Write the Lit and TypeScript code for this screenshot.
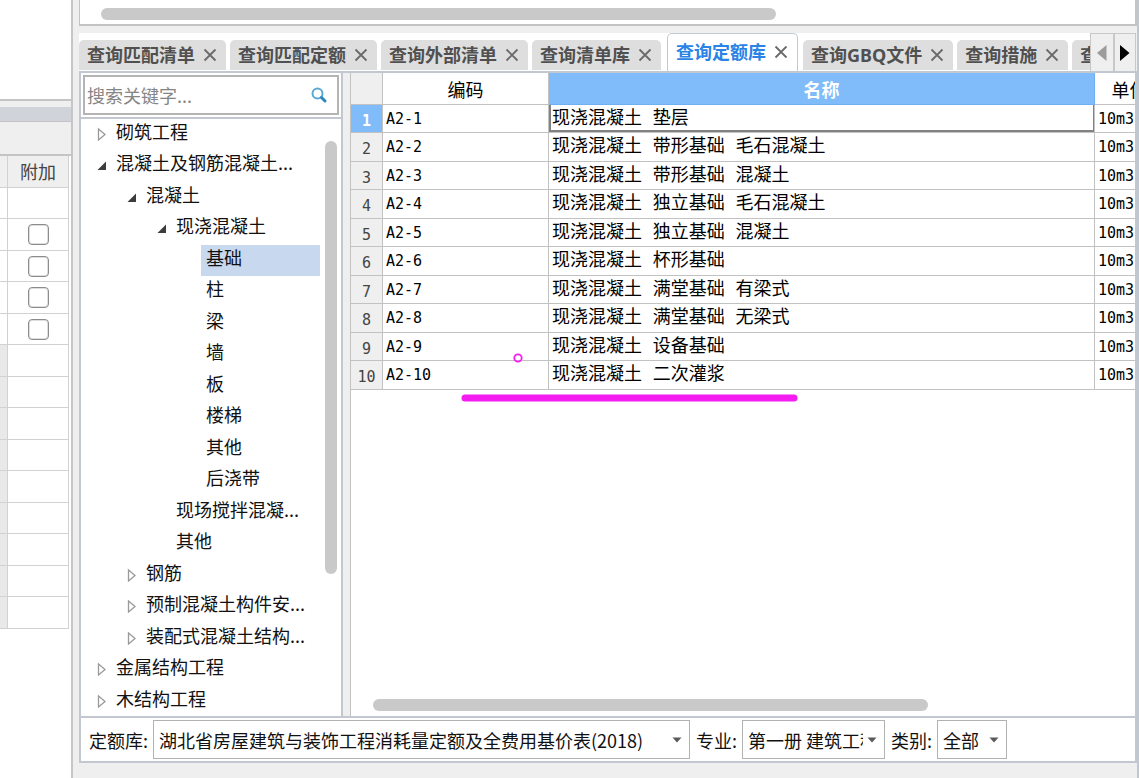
import { LitElement, html, css, svg, nothing } from "lit";
import { customElement, property } from "lit/decorators.js";
import { classMap } from "lit/directives/class-map.js";
import { styleMap } from "lit/directives/style-map.js";

type NodeState = "open" | "closed" | "leaf";

interface TreeNode {
  label: string;
  level: number;
  state: NodeState;
  selected?: boolean;
}

const TABS = [
  { label: "查询匹配清单" },
  { label: "查询匹配定额" },
  { label: "查询外部清单" },
  { label: "查询清单库" },
  { label: "查询定额库", active: true },
  { label: "查询GBQ文件" },
  { label: "查询措施" },
  { label: "查询人材机" },
];

const TREE: TreeNode[] = [
  { label: "砌筑工程", level: 0, state: "closed" },
  { label: "混凝土及钢筋混凝土...", level: 0, state: "open" },
  { label: "混凝土", level: 1, state: "open" },
  { label: "现浇混凝土", level: 2, state: "open" },
  { label: "基础", level: 3, state: "leaf", selected: true },
  { label: "柱", level: 3, state: "leaf" },
  { label: "梁", level: 3, state: "leaf" },
  { label: "墙", level: 3, state: "leaf" },
  { label: "板", level: 3, state: "leaf" },
  { label: "楼梯", level: 3, state: "leaf" },
  { label: "其他", level: 3, state: "leaf" },
  { label: "后浇带", level: 3, state: "leaf" },
  { label: "现场搅拌混凝...", level: 2, state: "leaf" },
  { label: "其他", level: 2, state: "leaf" },
  { label: "钢筋", level: 1, state: "closed" },
  { label: "预制混凝土构件安...", level: 1, state: "closed" },
  { label: "装配式混凝土结构...", level: 1, state: "closed" },
  { label: "金属结构工程", level: 0, state: "closed" },
  { label: "木结构工程", level: 0, state: "closed" },
];

const ROWS = [
  { code: "A2-1", name: "现浇混凝土 垫层" },
  { code: "A2-2", name: "现浇混凝土 带形基础 毛石混凝土" },
  { code: "A2-3", name: "现浇混凝土 带形基础 混凝土" },
  { code: "A2-4", name: "现浇混凝土 独立基础 毛石混凝土" },
  { code: "A2-5", name: "现浇混凝土 独立基础 混凝土" },
  { code: "A2-6", name: "现浇混凝土 杯形基础" },
  { code: "A2-7", name: "现浇混凝土 满堂基础 有梁式" },
  { code: "A2-8", name: "现浇混凝土 满堂基础 无梁式" },
  { code: "A2-9", name: "现浇混凝土 设备基础" },
  { code: "A2-10", name: "现浇混凝土 二次灌浆" },
];

const FIELDS = [
  { id: "lib", label: "定额库:", value: "湖北省房屋建筑与装饰工程消耗量定额及全费用基价表(2018)", size: "large" },
  { id: "major", label: "专业:", value: "第一册 建筑工程", size: "medium" },
  { id: "kind", label: "类别:", value: "全部", size: "small" },
];

/** Sheet at the far left, of which the last columns are in view. */
@customElement("side-sheet")
export class SideSheet extends LitElement {
  static styles = css`
    :host {
      display: flex;
      flex-direction: column;
      background: #fff;
      border-right: 2px solid #c6c6c8;
      overflow: hidden;
    }
    .blank { height: 99px; border-bottom: 2px solid #c4c4c4; }
    .gap { height: 6px; background: #efefef; }
    .caption { height: 14px; background: #d1d3da; border-bottom: 1px solid #c4c4c8; }
    .toolbar { height: 32px; background: #efefef; border-bottom: 2px solid #c4c4c4; }
    .sheet {
      width: 69px;
      border-collapse: separate;
      border-spacing: 0;
      table-layout: fixed;
    }
    .edge { width: 8px; }
    th, td {
      box-sizing: border-box;
      height: 32px;
      padding: 0;
      border-right: 1px solid #d2d2d2;
      border-bottom: 1px solid #d2d2d2;
      text-align: center;
      vertical-align: middle;
    }
    th {
      height: 32px;
      padding-bottom: 2px;
      background: #efefef;
      color: #444;
      font-size: 18px;
      line-height: 24px;
      font-weight: 400;
    }
    tbody tr:nth-child(odd) td { height: 31px; }
    .shade { background: #e9e9e9; }
    input {
      appearance: none;
      display: block;
      box-sizing: border-box;
      width: 21px;
      height: 21px;
      margin: 0 auto;
      border: 1px solid #8c8c8c;
      border-radius: 4px;
      background: #fff;
      box-shadow: inset 0 0 0 1px #dedede;
    }
  `;

  render() {
    return html`
      <div class="blank"></div>
      <div class="gap"></div>
      <div class="caption"></div>
      <div class="toolbar"></div>
      <table class="sheet">
        <thead>
          <tr><th class="edge"></th><th>附加</th></tr>
        </thead>
        <tbody>
          ${Array.from({ length: 14 }, (_, i) => html`
            <tr>
              <td class=${classMap({ shade: i > 4 })}></td>
              <td>${i > 0 && i < 5
                ? html`<input type="checkbox" aria-label="附加" />`
                : nothing}</td>
            </tr>`)}
        </tbody>
      </table>
    `;
  }
}

@customElement("tab-strip")
export class TabStrip extends LitElement {
  static styles = css`
    :host {
      display: flex;
      height: 38px;
      margin-right: 1px;
      background: #fff;
    }
    .tabs {
      flex: 1;
      min-width: 0;
      display: flex;
      align-items: flex-end;
      gap: 4px;
      overflow: hidden;
    }
    .tab {
      flex: none;
      display: flex;
      align-items: center;
      box-sizing: border-box;
      height: 30px;
      margin-bottom: 1px;
      padding: 0 9px 0 8px;
      gap: 8px;
      border-radius: 5px 5px 0 0;
      background: #dedede;
      color: #505050;
    }
    .active {
      height: 38px;
      margin: 0 1px 0 2px;
      padding-bottom: 2px;
      border: 1px solid #c3cad3;
      border-bottom: 0;
      background: #fff;
      color: #2b83e6;
    }
    button {
      padding: 0;
      border: 0;
      background: none;
      color: inherit;
      font: inherit;
    }
    .name {
      font-family: "Noto Sans", "Noto Sans CJK SC", sans-serif;
      font-size: 18px;
      line-height: 26px;
      font-weight: 700;
      white-space: nowrap;
    }
    .close { display: flex; color: #6a6a6a; }
    .nav {
      display: flex;
      box-sizing: border-box;
      border: 1px solid #c8c8c8;
      border-bottom: 0;
    }
    .step {
      display: flex;
      align-items: center;
      justify-content: center;
      width: 22px;
      background: #efefef;
      color: #000;
    }
    .step + .step { border-left: 2px solid #c8c8c8; }
    .off { color: #9c9c9c; }
  `;

  render() {
    return html`
      <div class="tabs" role="tablist">
        ${TABS.map((t) => html`
          <div class=${classMap({ tab: true, active: !!t.active })}>
            <button class="name" role="tab" aria-selected=${t.active ? "true" : "false"}>${t.label}</button>
            <button class="close" aria-label="关闭">
              <svg width="14" height="14" viewBox="0 0 14 14" fill="none" stroke="currentColor" stroke-width="1.8">
                <path d="M1.500 1.500 12.500 12.500M12.500 1.500 1.500 12.500" />
              </svg>
            </button>
          </div>`)}
      </div>
      <div class="nav">
        <button class="step off" aria-label="向左">
          <svg width="10" height="16" viewBox="0 0 10 16"><path d="M9.500 0V16L0 8Z" fill="currentColor" /></svg>
        </button>
        <button class="step" aria-label="向右">
          <svg width="10" height="18" viewBox="0 0 10 18"><path d="M0 1V17L9.500 9Z" fill="currentColor" /></svg>
        </button>
      </div>
    `;
  }
}

@customElement("chapter-tree")
export class ChapterTree extends LitElement {
  @property({ attribute: false }) nodes: TreeNode[] = [];

  static styles = css`
    :host {
      display: flex;
      flex-direction: column;
      background: #fff;
      overflow: hidden;
    }
    .search {
      display: flex;
      align-items: center;
      box-sizing: border-box;
      height: 40px;
      margin: 2px;
      padding: 0 9px 0 2px;
      border: 2px solid #b4b4b4;
    }
    input {
      flex: 1;
      min-width: 0;
      padding: 0;
      border: 0;
      outline: 0;
      background: none;
      color: #000;
      font: inherit;
      font-size: 18px;
      line-height: 26px;
    }
    input::placeholder { color: #858585; opacity: 1; }
    .body {
      flex: 1;
      min-height: 0;
      display: flex;
      border-top: 2px solid #c3c7cf;
      overflow: hidden;
    }
    ul {
      flex: 1;
      min-width: 0;
      margin: 0;
      padding: 0;
      list-style: none;
    }
    li { display: flex; height: 32px; }
    li:nth-child(odd) { height: 31px; }
    .slot {
      flex: none;
      display: flex;
      align-items: center;
      justify-content: flex-end;
      box-sizing: border-box;
      padding: 0 4px 2px 0;
    }
    .label {
      flex: 1;
      margin-right: 5px;
      padding-left: 5px;
      color: #111;
      font-size: 18px;
      line-height: 25px;
      white-space: nowrap;
    }
    .selected { background: #c8d8ef; }
    .track { width: 16px; padding-top: 22px; }
    .thumb { width: 12px; height: 433px; border-radius: 6px; background: #c9c9c9; }
  `;

  private arrow(state: NodeState) {
    if (state === "leaf") return nothing;
    return html`<svg width="10" height="14" viewBox="0 0 10 14">
      ${state === "open"
        ? svg`<path d="M9 3.500V12H.500Z" fill="#3c3c3c" />`
        : svg`<path d="M1.500 2 8 7.500 1.500 13Z" fill="#fff" stroke="#9a9a9a" stroke-width="1.300" />`}
    </svg>`;
  }

  render() {
    return html`
      <label class="search">
        <input type="text" placeholder="搜索关键字..." aria-label="搜索关键字" />
        <svg width="18" height="18" viewBox="0 0 18 18" fill="none">
          <circle cx="7.500" cy="7.500" r="5" stroke="#5aa9d3" stroke-width="2" />
          <path d="M11.500 11.500 15 15" stroke="#2b88bd" stroke-width="3" stroke-linecap="round" />
        </svg>
      </label>
      <div class="body">
        <ul role="tree">
          ${this.nodes.map((n) => html`
            <li role="treeitem" aria-level=${n.level + 1}>
              <span class="slot" style=${styleMap({ width: `${30 + 30 * n.level}px` })}>${this.arrow(n.state)}</span>
              <span class=${classMap({ label: true, selected: !!n.selected })}>${n.label}</span>
            </li>`)}
        </ul>
        <div class="track"><div class="thumb"></div></div>
      </div>
    `;
  }
}

@customElement("quota-grid")
export class QuotaGrid extends LitElement {
  static styles = css`
    :host {
      display: flex;
      flex-direction: column;
      justify-content: space-between;
      background: #fff;
      overflow: hidden;
    }
    table {
      width: calc(100% + 30px);
      border-collapse: separate;
      border-spacing: 0;
      table-layout: fixed;
    }
    .num { width: 32px; }
    .code { width: 166px; }
    .unit { width: 70px; }
    th, td {
      box-sizing: border-box;
      padding: 0;
      border-right: 1px solid #c2c2c2;
      border-bottom: 1px solid #c2c2c2;
      color: #000;
      font-size: 18px;
      line-height: 24px;
      font-weight: 400;
      white-space: nowrap;
      overflow: hidden;
    }
    thead th { height: 32px; text-align: center; }
    thead .num, tbody th { background: #efefef; }
    thead .current {
      background: #80bbfa;
      color: #fff;
      font-weight: 700;
      border-color: #6fb0f3;
    }
    tbody th, tbody td { height: 29px; }
    tbody tr:nth-child(odd) th, tbody tr:nth-child(odd) td { height: 28px; }
    tbody th {
      padding-top: 4px;
      color: #444;
      font-family: "DejaVu Sans Mono", monospace;
      font-size: 15px;
      line-height: 22px;
      text-align: center;
    }
    tbody .current {
      background: #80bbfa;
      color: #fff;
      font-weight: 700;
    }
    td { padding: 0 3px; }
    .mono { font-family: "DejaVu Sans Mono", monospace; font-size: 15px; }
    .title { font-family: "Liberation Mono", "Noto Sans CJK SC", sans-serif; }
    .focus { box-shadow: inset 2px 0 #828282, inset -1px -2px #828282; }
    .thumb {
      width: 555px;
      height: 12px;
      margin: 0 0 5px 22px;
      border-radius: 6px;
      background: #c9c9c9;
    }
  `;

  render() {
    return html`
      <table>
        <thead>
          <tr>
            <th class="num"></th>
            <th class="code">编码</th>
            <th class="current">名称</th>
            <th class="unit">单位</th>
          </tr>
        </thead>
        <tbody>
          ${ROWS.map((r, i) => html`
            <tr>
              <th class=${classMap({ current: i === 0 })}>${i + 1}</th>
              <td class="mono">${r.code}</td>
              <td class=${classMap({ title: true, focus: i === 0 })}>${r.name}</td>
              <td class="mono">10m3</td>
            </tr>`)}
        </tbody>
      </table>
      <div class="thumb"></div>
    `;
  }
}

@customElement("filter-bar")
export class FilterBar extends LitElement {
  static styles = css`
    :host {
      display: flex;
      align-items: center;
      height: 43px;
      padding-left: 8px;
      background: #fff;
      color: #111;
      font-size: 18px;
      line-height: 26px;
    }
    .field { position: relative; display: flex; margin: 0 6px 0 5px; }
    .large { width: 537px; }
    .medium { width: 143px; }
    .small { width: 70px; }
    label { white-space: nowrap; }
    select {
      appearance: none;
      box-sizing: border-box;
      width: 100%;
      height: 39px;
      padding: 0 21px 0 5px;
      border: 1px solid #b2b2b2;
      border-radius: 0;
      background: #fff;
      color: #111;
      font: inherit;
    }
    .arrow { position: absolute; right: 8px; top: 17px; pointer-events: none; }
  `;

  render() {
    return html`${FIELDS.map((f) => html`
      <label for=${f.id}>${f.label}</label>
      <span class="field ${f.size}">
        <select id=${f.id}><option>${f.value}</option></select>
        <svg class="arrow" width="10" height="6" viewBox="0 0 10 6"><path d="M.500 .500H9.500L5 5.500Z" fill="#5a5a5a" /></svg>
      </span>`)}`;
  }
}

@customElement("app-root")
export class AppRoot extends LitElement {
  static styles = css`
    :host {
      position: relative;
      display: flex;
      box-sizing: border-box;
      height: 100vh;
      background: #efefef;
      border-right: 2px solid #bfc7d4;
      overflow: hidden;
      font-family: "Noto Sans CJK SC", sans-serif;
    }
    side-sheet { flex: none; width: 71px; }
    main {
      flex: 1;
      min-width: 0;
      display: flex;
      flex-direction: column;
      margin-left: 6px;
    }
    .upper {
      height: 24px;
      margin-bottom: 7px;
      padding-left: 21px;
      border: solid #c4c4c4;
      border-width: 0 2px 2px 1px;
      background: #fff;
    }
    .thumb { width: 675px; height: 12px; margin-top: 8px; border-radius: 6px; background: #c9c9c9; }
    .panel {
      flex: 1;
      min-height: 0;
      display: flex;
      flex-direction: column;
      margin-bottom: 15px;
      border: 2px solid #c3c7cf;
    }
    .work { flex: 1; min-height: 0; display: flex; }
    chapter-tree { flex: none; width: 260px; border-right: 2px solid #c3c7cf; }
    quota-grid { flex: 1; min-width: 0; margin-left: 7px; border-left: 1px solid #c2c2c2; }
    filter-bar { border-top: 2px solid #c3c7cf; }
    .ink { position: absolute; left: 461px; top: 352px; pointer-events: none; }
  `;

  render() {
    return html`
      <side-sheet></side-sheet>
      <main>
        <div class="upper"><div class="thumb"></div></div>
        <tab-strip></tab-strip>
        <div class="panel">
          <div class="work">
            <chapter-tree .nodes=${TREE}></chapter-tree>
            <quota-grid></quota-grid>
          </div>
          <filter-bar></filter-bar>
        </div>
      </main>
      <svg class="ink" width="338" height="50" viewBox="0 0 338 50" fill="none" stroke="#f41cf0">
        <circle cx="57" cy="6" r="3.700" stroke-width="1.800" />
        <path d="M4 46H333" stroke-width="7" stroke-linecap="round" />
      </svg>
    `;
  }
}
